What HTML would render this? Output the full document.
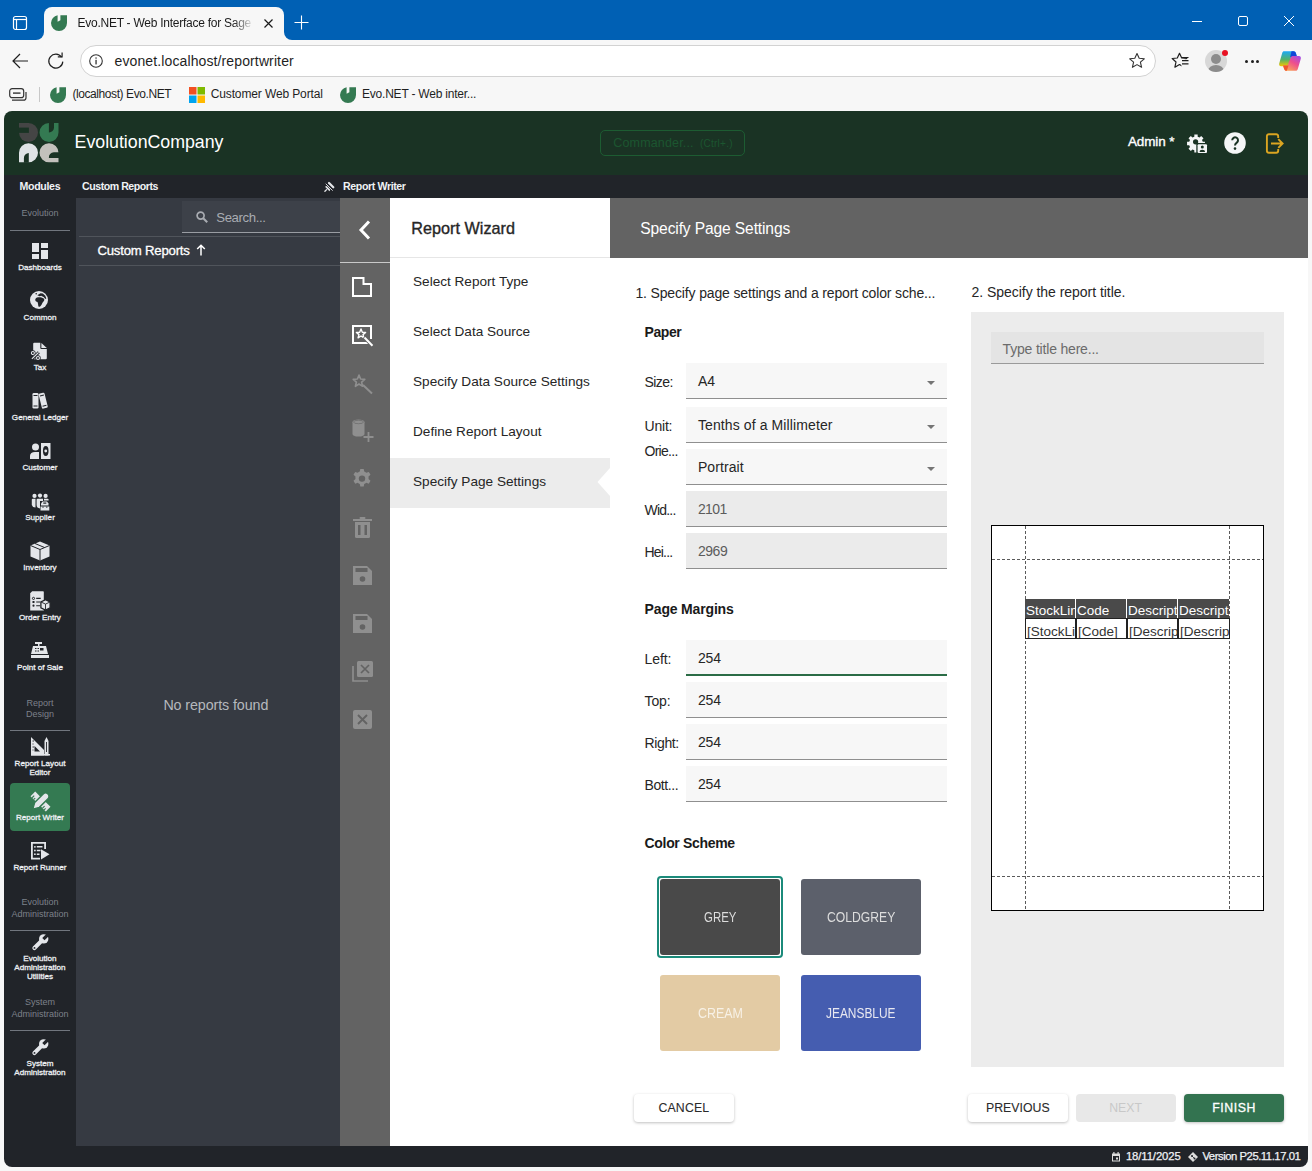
<!DOCTYPE html>
<html><head><meta charset="utf-8">
<style>
*{box-sizing:border-box;margin:0;padding:0}
html,body{width:1312px;height:1171px;overflow:hidden;background:#f7f7f7;font-family:"Liberation Sans",sans-serif;}
.a{position:absolute}
.t{position:absolute;white-space:nowrap;line-height:1}
svg{position:absolute;overflow:visible}
#tabbar{left:0;top:0;width:1312px;height:40px;background:#0060b4}
#tab{left:44px;top:7px;width:240px;height:34px;background:#f7f7f7;border-radius:8px 8px 0 0}
#toolbar{left:0;top:40px;width:1312px;height:71px;background:#f7f7f7}
#addr{left:80px;top:45px;width:1076px;height:32px;background:#fff;border:1px solid #d2d2d2;border-radius:16px}
.skirt{width:8px;height:8px;top:32px;background:#f7f7f7}
.skirt>div{position:absolute;left:0;top:0;width:8px;height:8px;background:#0060b4}
/* app */
#app{left:4px;top:111px;width:1304px;height:1056px;background:#212429;border-radius:8px;overflow:hidden}
#hdr{left:0;top:0;width:1304px;height:64px;background:#1a3324}
#crp{left:72px;top:87px;width:264px;height:948px;background:#363a42}
#strip{left:336px;top:87px;width:50px;height:948px;background:#636363}
#wiz{left:386px;top:87px;width:220px;height:948px;background:#fff}
#main{left:606px;top:87px;width:698px;height:948px;background:#fff}
#foot{left:0;top:1035px;width:1304px;height:21px;background:#212429}
</style></head>
<body>
<!-- ============ BROWSER CHROME ============ -->
<div id="tabbar" class="a"></div>
<div class="a skirt" style="left:36px"><div style="border-bottom-right-radius:8px"></div></div>
<div class="a skirt" style="left:284px"><div style="border-bottom-left-radius:8px"></div></div>
<div id="tab" class="a"></div>
<!-- sidebar toggle icon -->
<svg style="left:12px;top:15px" width="16" height="16" viewBox="0 0 16 16"><rect x="1.5" y="1.5" width="13" height="13" rx="2" fill="none" stroke="#fff" stroke-width="1.2"/><line x1="1.5" y1="4.5" x2="14.5" y2="4.5" stroke="#fff" stroke-width="1.2"/><line x1="4.5" y1="4.5" x2="4.5" y2="14.5" stroke="#fff" stroke-width="1.2"/></svg>
<!-- favicon -->
<svg style="left:51px;top:15px" width="16" height="16" viewBox="0 0 16 16"><path d="M6.6 0.2 L6.6 6.8 L9.4 5.2 L9.4 0.2 L16 0.2 L16 8 A8 8 0 1 1 0 8 A8 8 0 0 1 6.6 0.2 Z" fill="#347a52"/></svg>
<svg style="left:264px;top:19px" width="9" height="9" viewBox="0 0 9 9"><path d="M0.5 0.5L8.5 8.5M8.5 0.5L0.5 8.5" stroke="#1a1a1a" stroke-width="1.2"/></svg>
<svg style="left:294px;top:15px" width="15" height="15" viewBox="0 0 15 15"><path d="M7.5 0.5V14.5M0.5 7.5H14.5" stroke="#fff" stroke-width="1.1"/></svg>
<!-- window controls -->
<div class="a" style="left:1192px;top:21px;width:10px;height:1px;background:#fff"></div>
<div class="a" style="left:1238px;top:16px;width:10px;height:10px;border:1px solid #fff;border-radius:2px"></div>
<svg style="left:1284px;top:16px" width="10" height="10" viewBox="0 0 10 10"><path d="M0 0L10 10M10 0L0 10" stroke="#fff" stroke-width="1"/></svg>
<div id="toolbar" class="a"></div>
<!-- back / refresh -->
<svg style="left:12px;top:53px" width="17" height="16" viewBox="0 0 17 16"><path d="M16 8H1.2M8 1L1 8L8 15" fill="none" stroke="#1f1f1f" stroke-width="1.2"/></svg>
<svg style="left:47px;top:52px" width="18" height="18" viewBox="0 0 18 18"><path d="M14.6 5.2A7 7 0 1 0 15.8 9.6" fill="none" stroke="#1f1f1f" stroke-width="1.2"/><path d="M10.8 4.9H15.1V0.6" fill="none" stroke="#1f1f1f" stroke-width="1.2"/></svg>
<div id="addr" class="a"></div>
<svg style="left:89px;top:54px" width="14" height="14" viewBox="0 0 14 14"><circle cx="7" cy="7" r="6.3" fill="none" stroke="#333" stroke-width="1.1"/><rect x="6.4" y="5.8" width="1.3" height="4.6" fill="#333"/><rect x="6.4" y="3.4" width="1.3" height="1.3" fill="#333"/></svg>
<svg style="left:1128px;top:52px" width="18" height="18" viewBox="0 0 18 18"><path d="M9 1.5L11.2 6.3L16.3 6.8L12.4 10.2L13.6 15.3L9 12.6L4.4 15.3L5.6 10.2L1.7 6.8L6.8 6.3Z" fill="none" stroke="#333" stroke-width="1.1" stroke-linejoin="round"/></svg>
<svg style="left:1171px;top:52px" width="19" height="18" viewBox="0 0 19 18"><path d="M8.5 1.3L10.7 6L15.8 6.5L12 10L13.1 15.2L8.5 12.5L3.9 15.2L5 10L1.2 6.5L6.3 6Z" fill="none" stroke="#1f1f1f" stroke-width="1.2" stroke-linejoin="round"/><rect x="10.4" y="7.2" width="9" height="11" fill="#f7f7f7"/><path d="M11 5.5H17.5M11 8.6H17.5M11 11.8H17.5" stroke="#1f1f1f" stroke-width="1.2"/></svg>
<div class="a" style="left:1205px;top:50px;width:22px;height:22px;border-radius:50%;background:#d8d8d8;overflow:hidden"><div class="a" style="left:6px;top:4px;width:10px;height:10px;border-radius:50%;background:#8c8c8c"></div><div class="a" style="left:3px;top:15px;width:16px;height:12px;border-radius:50%;background:#8c8c8c"></div></div>
<div class="a" style="left:1222px;top:50px;width:6px;height:6px;border-radius:50%;background:#e81123"></div>
<div class="a" style="left:1245px;top:60px;width:3px;height:3px;border-radius:50%;background:#1f1f1f"></div>
<div class="a" style="left:1250.5px;top:60px;width:3px;height:3px;border-radius:50%;background:#1f1f1f"></div>
<div class="a" style="left:1256px;top:60px;width:3px;height:3px;border-radius:50%;background:#1f1f1f"></div>
<svg style="left:1279px;top:51px" width="22" height="20" viewBox="0 0 22 20"><defs><linearGradient id="cg1" x1="0" y1="0" x2="0" y2="1"><stop offset="0" stop-color="#1aa8f7"/><stop offset="0.55" stop-color="#52b26a"/><stop offset="1" stop-color="#f5c500"/></linearGradient><linearGradient id="cg2" x1="1" y1="0" x2="0.3" y2="1"><stop offset="0" stop-color="#9b4bf0"/><stop offset="0.5" stop-color="#ee4f8c"/><stop offset="1" stop-color="#fba45a"/></linearGradient></defs><path d="M5 0.2H14.5C15.8 0.2 16.5 1 17 2.5L18 6H13.5L10 14.5C9.5 15 9 15.2 8.5 15.2H2C0.6 15.2 -0.2 14 0.2 12.5L3.2 2C3.6 0.8 4.2 0.2 5 0.2Z" fill="url(#cg1)"/><path d="M12.5 0.2H14.5C15.8 0.2 16.5 1 17 2.5L18 6H13.5L11.2 6Z" fill="#1046d8"/><path d="M17 19.8H7.5C6.2 19.8 5.5 19 5 17.5L4 14.5H8.5L12 6C12.5 5.3 13 5 13.5 5H20C21.4 5 22.2 6.2 21.8 7.7L18.8 18C18.4 19.2 17.8 19.8 17 19.8Z" fill="url(#cg2)"/><path d="M4 14.5H9.5L7.8 19.8H7.5C6.2 19.8 5.5 19 5 17.5Z" fill="#f0552e"/></svg>
<!-- bookmarks -->
<svg style="left:9px;top:88px" width="18" height="13" viewBox="0 0 18 13"><rect x="0.7" y="0.7" width="14" height="9" rx="2.5" fill="none" stroke="#333" stroke-width="1.2"/><path d="M3 12.2H14.5C16 12.2 17 11.2 17 9.7V4" fill="none" stroke="#333" stroke-width="1.2"/><rect x="4" y="4.4" width="7.5" height="1.4" fill="#333"/></svg>
<div class="a" style="left:39px;top:87px;width:1px;height:15px;background:#c8c8c8"></div>
<svg style="left:50px;top:87px" width="16" height="16" viewBox="0 0 16 16"><path d="M6.6 0.2 L6.6 6.8 L9.4 5.2 L9.4 0.2 L16 0.2 L16 8 A8 8 0 1 1 0 8 A8 8 0 0 1 6.6 0.2 Z" fill="#347a52"/></svg>
<svg style="left:189px;top:87px" width="16" height="16" viewBox="0 0 16 16"><rect x="0" y="0" width="7.5" height="7.5" fill="#f25022"/><rect x="8.5" y="0" width="7.5" height="7.5" fill="#7fba00"/><rect x="0" y="8.5" width="7.5" height="7.5" fill="#00a4ef"/><rect x="8.5" y="8.5" width="7.5" height="7.5" fill="#ffb900"/></svg>
<svg style="left:340px;top:87px" width="16" height="16" viewBox="0 0 16 16"><path d="M6.6 0.2 L6.6 6.8 L9.4 5.2 L9.4 0.2 L16 0.2 L16 8 A8 8 0 1 1 0 8 A8 8 0 0 1 6.6 0.2 Z" fill="#347a52"/></svg>
<div class="t" style="left:77.50px;top:16.84px;font-size:12px;color:#1a1a1a;letter-spacing:-0.253px;width:176px;padding-bottom:4px;overflow:hidden;-webkit-mask-image:linear-gradient(90deg,#000 88%,transparent 100%)">Evo.NET - Web Interface for Sage</div>
<div class="t" style="left:114.50px;top:54.15px;font-size:14px;color:#1f1f1f;letter-spacing:0.119px;">evonet.localhost/reportwriter</div>
<div class="t" style="left:72.40px;top:88.44px;font-size:12px;color:#1f1f1f;letter-spacing:-0.417px;">(localhost) Evo.NET</div>
<div class="t" style="left:210.70px;top:88.44px;font-size:12px;color:#1f1f1f;letter-spacing:-0.122px;">Customer Web Portal</div>
<div class="t" style="left:362.00px;top:88.44px;font-size:12px;color:#1f1f1f;letter-spacing:-0.216px;">Evo.NET - Web inter...</div>
<div class="a" style="left:0;top:0;width:1312px;height:1171px;clip-path:inset(111px 4px 4px 4px round 8px)">
<div class="a" style="left:0px;top:111px;width:1312px;height:64px;background:#1a3324;"></div>
<div class="a" style="left:0px;top:175px;width:1312px;height:23px;background:#212429;"></div>
<div class="a" style="left:0px;top:198px;width:76px;height:948px;background:#212429;"></div>
<div class="a" style="left:76px;top:198px;width:264px;height:948px;background:#363a42;"></div>
<div class="a" style="left:340px;top:198px;width:50px;height:948px;background:#636363;"></div>
<div class="a" style="left:390px;top:198px;width:220px;height:948px;background:#ffffff;"></div>
<div class="a" style="left:610px;top:198px;width:698px;height:948px;background:#ffffff;"></div>
<div class="a" style="left:0px;top:1146px;width:1312px;height:25px;background:#212429;"></div>
<svg style="left:19px;top:123px;" width="40" height="40" viewBox="0 0 40 40">
<path d="M0 0H9.5A9.5 9.5 0 0 1 19 9.5A9.5 9.5 0 0 1 9.5 19A9.5 9.5 0 0 1 0 9.5Z" fill="#454545"/>
<rect x="-0.5" y="4.6" width="10.4" height="5.3" fill="#1a3324"/>
<g transform="translate(20.5 0)"><path d="M19 0V9.5A9.5 9.5 0 0 1 9.5 19A9.5 9.5 0 0 1 0 9.5A9.5 9.5 0 0 1 9.5 0Z" fill="#347a52"/>
<path d="M9.4 -0.5H14.5V4.5A5 5 0 0 1 9.4 9.5Z" fill="#1a3324"/></g>
<g transform="translate(0 20.2)"><path d="M0 19V9.5A9.5 9.5 0 0 1 9.5 0A9.5 9.5 0 0 1 19 9.5A9.5 9.5 0 0 1 9.5 19Z" fill="#dfe3e5"/>
<path d="M4.9 19.5V14.8A5 5 0 0 1 9.8 9.8V19.5Z" fill="#1a3324"/></g>
<g transform="translate(20.5 20.2)"><path d="M19 19H9.5A9.5 9.5 0 0 1 0 9.5A9.5 9.5 0 0 1 9.5 0A9.5 9.5 0 0 1 19 9.5Z" fill="#c3c1bc"/>
<path d="M19.5 9H14.4A5 5 0 0 0 9.4 14.7H19.5Z" fill="#1a3324"/></g>
</svg>
<div class="t" style="left:74.60px;top:133.63px;font-size:17.8px;color:#ffffff;letter-spacing:-0.027px;">EvolutionCompany</div>
<div class="a" style="left:600px;top:130px;width:145px;height:26px;background:transparent;border:1px solid #1d5c32;border-radius:5px;box-sizing:border-box"></div>
<div class="t" style="left:613.30px;top:137.02px;font-size:12.5px;color:#1c5630;letter-spacing:0.163px;">Commander...</div>
<div class="t" style="left:700.00px;top:139.13px;font-size:10px;color:#1c5630;letter-spacing:0.238px;">(Ctrl+.)</div>
<div class="t" style="left:1128.00px;top:135.37px;font-size:13.5px;color:#ffffff;letter-spacing:-0.145px;-webkit-text-stroke:0.35px #fff">Admin *</div>
<svg style="left:1185px;top:133px;" width="24" height="22" viewBox="0 0 24 22"><path fill="#f5f6f7" d="M19.95 8.85L19.95 12.15L17.79 12.19L17.00 14.11L18.50 15.66L16.16 18.00L14.61 16.50L12.69 17.29L12.65 19.45L9.35 19.45L9.31 17.29L7.39 16.50L5.84 18.00L3.50 15.66L5.00 14.11L4.21 12.19L2.05 12.15L2.05 8.85L4.21 8.81L5.00 6.89L3.50 5.34L5.84 3.00L7.39 4.50L9.31 3.71L9.35 1.55L12.65 1.55L12.69 3.71L14.61 4.50L16.16 3.00L18.50 5.34L17.00 6.89L17.79 8.81Z"/><circle cx="10.6" cy="8.8" r="2.6" fill="#1a3324"/><rect x="11.3" y="10" width="12" height="11.5" fill="#1a3324"/><rect x="12.6" y="11.3" width="9.4" height="8.8" rx="1" fill="#f5f6f7"/><circle cx="17.3" cy="14" r="1.5" fill="#1a3324"/><path d="M14.6 19H20A2.7 2.2 0 0 0 14.6 19Z" fill="#1a3324"/></svg>
<svg style="left:1224px;top:132px;" width="22" height="22" viewBox="0 0 22 22"><circle cx="11" cy="11" r="10.8" fill="#f5f6f7"/><path d="M8.2 8.3a2.9 2.9 0 1 1 4.6 2.3c-1.1 0.8-1.8 1.3-1.8 2.9" fill="none" stroke="#1a3324" stroke-width="2"/><circle cx="11" cy="16.6" r="1.3" fill="#1a3324"/></svg>
<svg style="left:1265.5px;top:133px;" width="19" height="21" viewBox="0 0 19 21"><path d="M12.2 5V3.2A2 2 0 0 0 10.2 1.2H2.9A2 2 0 0 0 0.9 3.2V17.8A2 2 0 0 0 2.9 19.8H10.2A2 2 0 0 0 12.2 17.8V16" fill="none" stroke="#dba521" stroke-width="1.9"/><path d="M5 10.5H16.5M12.3 6.2L16.6 10.5L12.3 14.8" fill="none" stroke="#dba521" stroke-width="1.9"/></svg>
<div class="t" style="left:19.50px;top:180.82px;font-size:10.6px;color:#f0f2f5;font-weight:bold;letter-spacing:-0.315px;">Modules</div>
<div class="t" style="left:82.00px;top:180.82px;font-size:10.6px;color:#f0f2f5;font-weight:bold;letter-spacing:-0.458px;">Custom Reports</div>
<div class="t" style="left:343.10px;top:180.72px;font-size:10.6px;color:#f0f2f5;font-weight:bold;letter-spacing:-0.386px;">Report Writer</div>
<svg style="left:323.5px;top:181.5px;" width="10" height="10" viewBox="0 0 10 10"><path d="M5 1L9.3 5.3" stroke="#e6e8eb" stroke-width="2.2" stroke-linecap="round"/><path d="M3.8 3.2L7 6.4L5.4 9.2L1 4.8Z" fill="#e6e8eb"/><path d="M2.6 7.6L0.9 9.3" stroke="#e6e8eb" stroke-width="1.3" stroke-linecap="round"/><path d="M1.6 1.6L8.6 8.6" stroke="#212429" stroke-width="2"/><path d="M2 2L8.4 8.4" stroke="#e6e8eb" stroke-width="0.9" stroke-linecap="round"/></svg>
<div class="a" style="left:182px;top:201px;width:158px;height:31px;background:#3d4149;"></div>
<div class="a" style="left:182px;top:232px;width:158px;height:1px;background:#9a9da3;"></div>
<svg style="left:196px;top:211px;" width="12" height="12" viewBox="0 0 12 12"><circle cx="4.6" cy="4.6" r="3.5" fill="none" stroke="#a9acb2" stroke-width="1.7"/><path d="M7.2 7.2L11.2 11.2" stroke="#a9acb2" stroke-width="2"/></svg>
<div class="t" style="left:216.30px;top:211.02px;font-size:13.2px;color:#a9acb2;letter-spacing:-0.403px;">Search...</div>
<div class="a" style="left:79px;top:236px;width:261px;height:1px;background:#50545b;"></div>
<div class="t" style="left:97.40px;top:243.82px;font-size:13.2px;color:#ffffff;letter-spacing:-0.213px;-webkit-text-stroke:0.3px #fff">Custom Reports</div>
<svg style="left:196px;top:244px;" width="10" height="12" viewBox="0 0 10 12"><path d="M5 11.5V1.2M1.2 5L5 1.2L8.8 5" fill="none" stroke="#fff" stroke-width="1.5"/></svg>
<div class="a" style="left:79px;top:265px;width:261px;height:1px;background:#50545b;"></div>
<div class="t" style="left:163.40px;top:697.69px;font-size:14.3px;color:#b5b8bd;letter-spacing:-0.101px;">No reports found</div>
<div class="a" style="left:340px;top:262px;width:50px;height:1px;background:#c9c9c9;"></div>
<svg style="left:359px;top:220px;" width="12" height="20" viewBox="0 0 12 20"><path d="M10 1.5L2 10L10 18.5" fill="none" stroke="#fff" stroke-width="3"/></svg>
<div class="a" style="left:390px;top:257px;width:220px;height:1px;background:#e6e6e6;"></div>
<div class="t" style="left:411.30px;top:220.08px;font-size:16.2px;color:#262626;letter-spacing:0.014px;-webkit-text-stroke:0.35px #262626">Report Wizard</div>
<div class="a" style="left:390px;top:458px;width:220px;height:50px;background:#ececec;"></div>
<svg style="left:596px;top:458px;" width="14" height="50" viewBox="0 0 14 50"><path d="M14 10L1.5 24L14 38Z" fill="#fff"/></svg>
<div class="t" style="left:413.00px;top:275.28px;font-size:13.6px;color:#262626;">Select Report Type</div>
<div class="t" style="left:413.00px;top:325.28px;font-size:13.6px;color:#262626;">Select Data Source</div>
<div class="t" style="left:413.00px;top:375.28px;font-size:13.6px;color:#262626;">Specify Data Source Settings</div>
<div class="t" style="left:413.00px;top:425.28px;font-size:13.6px;color:#262626;">Define Report Layout</div>
<div class="t" style="left:413.00px;top:475.28px;font-size:13.6px;color:#262626;">Specify Page Settings</div>
<div class="a" style="left:610px;top:198px;width:698px;height:60px;background:#636363;"></div>
<div class="t" style="left:640.30px;top:221.49px;font-size:15.6px;color:#ffffff;letter-spacing:-0.131px;">Specify Page Settings</div>
<div class="t" style="left:635.40px;top:285.75px;font-size:14px;color:#262626;letter-spacing:-0.148px;">1. Specify page settings and a report color sche...</div>
<div class="t" style="left:971.50px;top:284.95px;font-size:14px;color:#262626;letter-spacing:-0.035px;">2. Specify the report title.</div>
<div class="t" style="left:644.60px;top:325.45px;font-size:14px;color:#1a1a1a;font-weight:bold;letter-spacing:-0.453px;">Paper</div>
<div class="a" style="left:686px;top:363px;width:261px;height:36px;background:#f7f7f7;"></div>
<div class="a" style="left:686px;top:398px;width:261px;height:1px;background:#8f8f8f;"></div>
<div class="t" style="left:644.50px;top:375.05px;font-size:14px;color:#262626;letter-spacing:-0.581px;">Size:</div>
<div class="t" style="left:697.90px;top:374.15px;font-size:14px;color:#262626;">A4</div>
<svg style="left:927px;top:381px;" width="8" height="4" viewBox="0 0 8 4"><path d="M0 0H8L4 4Z" fill="#757575"/></svg>
<div class="a" style="left:686px;top:407px;width:261px;height:36px;background:#f7f7f7;"></div>
<div class="a" style="left:686px;top:442px;width:261px;height:1px;background:#8f8f8f;"></div>
<div class="t" style="left:644.50px;top:419.05px;font-size:14px;color:#262626;letter-spacing:-0.197px;">Unit:</div>
<div class="t" style="left:697.90px;top:418.15px;font-size:14px;color:#262626;letter-spacing:0.111px;">Tenths of a Millimeter</div>
<svg style="left:927px;top:425px;" width="8" height="4" viewBox="0 0 8 4"><path d="M0 0H8L4 4Z" fill="#757575"/></svg>
<div class="a" style="left:686px;top:449px;width:261px;height:36px;background:#f7f7f7;"></div>
<div class="a" style="left:686px;top:484px;width:261px;height:1px;background:#8f8f8f;"></div>
<div class="t" style="left:644.50px;top:443.75px;font-size:14px;color:#262626;letter-spacing:-0.720px;">Orie...</div>
<div class="t" style="left:697.90px;top:459.65px;font-size:14px;color:#262626;letter-spacing:0.082px;">Portrait</div>
<svg style="left:927px;top:467px;" width="8" height="4" viewBox="0 0 8 4"><path d="M0 0H8L4 4Z" fill="#757575"/></svg>
<div class="a" style="left:686px;top:491px;width:261px;height:36px;background:#ebebeb;"></div>
<div class="a" style="left:686px;top:526px;width:261px;height:1px;background:#8f8f8f;"></div>
<div class="t" style="left:644.50px;top:503.05px;font-size:14px;color:#262626;letter-spacing:-0.796px;">Wid...</div>
<div class="t" style="left:697.90px;top:502.15px;font-size:14px;color:#5c5c5c;letter-spacing:-0.615px;">2101</div>
<div class="a" style="left:686px;top:533px;width:261px;height:36px;background:#ebebeb;"></div>
<div class="a" style="left:686px;top:568px;width:261px;height:1px;background:#8f8f8f;"></div>
<div class="t" style="left:644.50px;top:545.05px;font-size:14px;color:#262626;letter-spacing:-0.795px;">Hei...</div>
<div class="t" style="left:697.90px;top:544.15px;font-size:14px;color:#5c5c5c;letter-spacing:-0.449px;">2969</div>
<div class="t" style="left:644.60px;top:602.15px;font-size:14px;color:#1a1a1a;font-weight:bold;letter-spacing:-0.166px;">Page Margins</div>
<div class="a" style="left:686px;top:640px;width:261px;height:36px;background:#f7f7f7;"></div>
<div class="a" style="left:686px;top:674px;width:261px;height:2px;background:#2b6c46;"></div>
<div class="t" style="left:644.50px;top:652.05px;font-size:14px;color:#262626;letter-spacing:-0.060px;">Left:</div>
<div class="t" style="left:697.90px;top:651.15px;font-size:14px;color:#262626;letter-spacing:-0.080px;">254</div>
<div class="a" style="left:686px;top:682px;width:261px;height:36px;background:#f7f7f7;"></div>
<div class="a" style="left:686px;top:717px;width:261px;height:1px;background:#8f8f8f;"></div>
<div class="t" style="left:644.50px;top:694.05px;font-size:14px;color:#262626;letter-spacing:-0.087px;">Top:</div>
<div class="t" style="left:697.90px;top:693.15px;font-size:14px;color:#262626;letter-spacing:-0.080px;">254</div>
<div class="a" style="left:686px;top:724px;width:261px;height:36px;background:#f7f7f7;"></div>
<div class="a" style="left:686px;top:759px;width:261px;height:1px;background:#8f8f8f;"></div>
<div class="t" style="left:644.50px;top:736.05px;font-size:14px;color:#262626;letter-spacing:-0.375px;">Right:</div>
<div class="t" style="left:697.90px;top:735.15px;font-size:14px;color:#262626;letter-spacing:-0.080px;">254</div>
<div class="a" style="left:686px;top:766px;width:261px;height:36px;background:#f7f7f7;"></div>
<div class="a" style="left:686px;top:801px;width:261px;height:1px;background:#8f8f8f;"></div>
<div class="t" style="left:644.50px;top:778.05px;font-size:14px;color:#262626;letter-spacing:-0.395px;">Bott...</div>
<div class="t" style="left:697.90px;top:777.15px;font-size:14px;color:#262626;letter-spacing:-0.080px;">254</div>
<div class="t" style="left:644.60px;top:835.75px;font-size:14px;color:#1a1a1a;font-weight:bold;letter-spacing:-0.331px;">Color Scheme</div>
<div class="a" style="left:657px;top:876px;width:126px;height:82px;background:transparent;border:2px solid #1b8a7a;border-radius:4px;box-sizing:border-box"></div>
<div class="a" style="left:660px;top:879px;width:120px;height:76px;background:#494949;border-radius:3px"></div>
<div class="a" style="left:801px;top:879px;width:120px;height:76px;background:#5c606b;border-radius:3px"></div>
<div class="a" style="left:660px;top:975px;width:120px;height:76px;background:#e3cba4;border-radius:3px"></div>
<div class="a" style="left:801px;top:975px;width:120px;height:76px;background:#455db0;border-radius:3px"></div>
<div class="t" style="left:703.80px;top:910.05px;font-size:14px;color:#dddddd;transform:scaleX(0.8166);transform-origin:0 0;">GREY</div>
<div class="t" style="left:826.85px;top:910.05px;font-size:14px;color:#dddddd;transform:scaleX(0.8692);transform-origin:0 0;">COLDGREY</div>
<div class="t" style="left:697.50px;top:1005.95px;font-size:14px;color:#f7f1e6;transform:scaleX(0.8900);transform-origin:0 0;">CREAM</div>
<div class="t" style="left:826.25px;top:1005.95px;font-size:14px;color:#e8e8f0;transform:scaleX(0.8507);transform-origin:0 0;">JEANSBLUE</div>
<div class="a" style="left:634px;top:1094px;width:100px;height:28px;background:#ffffff;border-radius:4px;box-shadow:0 1px 3px rgba(0,0,0,0.25)"></div>
<div class="t" style="left:658.40px;top:1101.59px;font-size:12.3px;color:#2b2b2b;letter-spacing:0.180px;-webkit-text-stroke:0.1px #2b2b2b">CANCEL</div>
<div class="a" style="left:968px;top:1094px;width:100px;height:28px;background:#ffffff;border-radius:4px;box-shadow:0 1px 3px rgba(0,0,0,0.25)"></div>
<div class="t" style="left:986.00px;top:1101.59px;font-size:12.3px;color:#2b2b2b;letter-spacing:0.019px;-webkit-text-stroke:0.1px #2b2b2b">PREVIOUS</div>
<div class="a" style="left:1076px;top:1094px;width:100px;height:28px;background:#e8e8e8;border-radius:4px"></div>
<div class="t" style="left:1109.20px;top:1101.59px;font-size:12.3px;color:#c8c8c8;letter-spacing:0.032px;">NEXT</div>
<div class="a" style="left:1184px;top:1094px;width:100px;height:28px;background:#337350;border-radius:4px;box-shadow:0 1px 3px rgba(0,0,0,0.25)"></div>
<div class="t" style="left:1212.20px;top:1101.59px;font-size:12.3px;color:#ffffff;letter-spacing:0.556px;-webkit-text-stroke:0.3px #fff">FINISH</div>
<div class="a" style="left:971px;top:312px;width:313px;height:755px;background:#ececec;"></div>
<div class="a" style="left:991px;top:332px;width:273px;height:32px;background:#e4e4e4;"></div>
<div class="a" style="left:991px;top:363px;width:273px;height:1px;background:#9a9a9a;"></div>
<div class="t" style="left:1002.60px;top:341.95px;font-size:14px;color:#6b6b6b;letter-spacing:-0.189px;">Type title here...</div>
<div class="a" style="left:991px;top:525px;width:273px;height:386px;background:#ffffff;border:1px solid #000;box-sizing:border-box"></div>
<div class="a" style="left:992px;top:559px;width:271px;height:1px;background:transparent;background-image:linear-gradient(90deg,#5a5a5a 60%,transparent 60%);background-size:5px 1px"></div>
<div class="a" style="left:992px;top:876px;width:271px;height:1px;background:transparent;background-image:linear-gradient(90deg,#5a5a5a 60%,transparent 60%);background-size:5px 1px"></div>
<div class="a" style="left:1025px;top:526px;width:1px;height:384px;background:transparent;background-image:linear-gradient(180deg,#5a5a5a 60%,transparent 60%);background-size:1px 5px"></div>
<div class="a" style="left:1229px;top:526px;width:1px;height:384px;background:transparent;background-image:linear-gradient(180deg,#5a5a5a 60%,transparent 60%);background-size:1px 5px"></div>
<div class="a" style="left:1025px;top:599px;width:50px;height:19px;background:#4a4a4a;overflow:hidden"></div>
<div class="a" style="left:1025px;top:599px;width:50px;height:19px;overflow:hidden"><div class="t" style="left:1px;top:5px;font-size:13.5px;color:#fff">StockLineName</div></div>
<div class="a" style="left:1025px;top:618px;width:51px;height:21px;border:1px solid #222;box-sizing:border-box;overflow:hidden"><div class="t" style="left:1px;top:6px;font-size:13.5px;color:#333">[StockLineName]</div></div>
<div class="a" style="left:1076px;top:599px;width:50px;height:19px;background:#4a4a4a;overflow:hidden"></div>
<div class="a" style="left:1076px;top:599px;width:50px;height:19px;overflow:hidden"><div class="t" style="left:1px;top:5px;font-size:13.5px;color:#fff">Code</div></div>
<div class="a" style="left:1076px;top:618px;width:51px;height:21px;border:1px solid #222;box-sizing:border-box;overflow:hidden"><div class="t" style="left:1px;top:6px;font-size:13.5px;color:#333">[Code]</div></div>
<div class="a" style="left:1127px;top:599px;width:50px;height:19px;background:#4a4a4a;overflow:hidden"></div>
<div class="a" style="left:1127px;top:599px;width:50px;height:19px;overflow:hidden"><div class="t" style="left:1px;top:5px;font-size:13.5px;color:#fff">Description</div></div>
<div class="a" style="left:1127px;top:618px;width:51px;height:21px;border:1px solid #222;box-sizing:border-box;overflow:hidden"><div class="t" style="left:1px;top:6px;font-size:13.5px;color:#333">[Description]</div></div>
<div class="a" style="left:1178px;top:599px;width:51px;height:19px;background:#4a4a4a;overflow:hidden"></div>
<div class="a" style="left:1178px;top:599px;width:51px;height:19px;overflow:hidden"><div class="t" style="left:1px;top:5px;font-size:13.5px;color:#fff">Description</div></div>
<div class="a" style="left:1178px;top:618px;width:52px;height:21px;border:1px solid #222;box-sizing:border-box;overflow:hidden"><div class="t" style="left:1px;top:6px;font-size:13.5px;color:#333">[Description]</div></div>
<svg style="left:1111px;top:1152px;" width="10" height="10" viewBox="0 0 10 10"><path d="M1 1.5H9V9.5H1Z" fill="#dcdcdc"/><rect x="2" y="4" width="6" height="4.5" fill="#212429"/><rect x="5" y="5.5" width="2" height="2" fill="#dcdcdc"/><rect x="2.3" y="0" width="1.2" height="2" fill="#dcdcdc"/><rect x="6.5" y="0" width="1.2" height="2" fill="#dcdcdc"/></svg>
<div class="t" style="left:1125.90px;top:1150.63px;font-size:11.3px;color:#f0f2f5;letter-spacing:-0.091px;-webkit-text-stroke:0.25px #f0f2f5">18/11/2025</div>
<svg style="left:1188px;top:1152px;" width="10" height="10" viewBox="0 0 10 10"><path d="M5 0L10 5L5 10L0 5Z" fill="#dcdcdc"/><circle cx="4" cy="4" r="1" fill="#212429"/><circle cx="6.5" cy="6.5" r="1" fill="#212429"/><path d="M4 4L6.5 6.5" stroke="#212429" stroke-width="0.8"/></svg>
<div class="t" style="left:1202.40px;top:1150.63px;font-size:11.3px;color:#f0f2f5;letter-spacing:-0.465px;-webkit-text-stroke:0.25px #f0f2f5">Version P25.11.17.01</div>
<div class="t" style="left:21.49px;top:209.28px;font-size:9.0px;color:#7d8189;">Evolution</div>
<div class="a" style="left:10px;top:230px;width:60px;height:1px;background:#71767e;"></div>
<div class="t" style="left:26.49px;top:698.58px;font-size:9.0px;color:#7d8189;">Report</div>
<div class="t" style="left:25.99px;top:710.28px;font-size:9.0px;color:#7d8189;">Design</div>
<div class="a" style="left:10px;top:730px;width:60px;height:1px;background:#71767e;"></div>
<div class="t" style="left:21.49px;top:898.38px;font-size:9.0px;color:#7d8189;">Evolution</div>
<div class="t" style="left:11.49px;top:910.38px;font-size:9.0px;color:#7d8189;">Administration</div>
<div class="a" style="left:10px;top:930px;width:60px;height:1px;background:#71767e;"></div>
<div class="t" style="left:25.00px;top:998.38px;font-size:9.0px;color:#7d8189;">System</div>
<div class="t" style="left:11.49px;top:1010.38px;font-size:9.0px;color:#7d8189;">Administration</div>
<div class="a" style="left:10px;top:1030px;width:60px;height:1px;background:#71767e;"></div>
<div class="a" style="left:10px;top:783px;width:60px;height:48px;background:#347a52;border-radius:4px"></div>
<div class="t" style="left:18.16px;top:263.54px;font-size:8.1px;color:#eef0f3;-webkit-text-stroke:0.3px #eef0f3">Dashboards</div>
<div class="t" style="left:23.57px;top:313.54px;font-size:8.1px;color:#eef0f3;-webkit-text-stroke:0.3px #eef0f3">Common</div>
<div class="t" style="left:33.70px;top:363.54px;font-size:8.1px;color:#eef0f3;-webkit-text-stroke:0.3px #eef0f3">Tax</div>
<div class="t" style="left:11.85px;top:413.94px;font-size:8.1px;color:#eef0f3;-webkit-text-stroke:0.3px #eef0f3">General Ledger</div>
<div class="t" style="left:22.44px;top:463.64px;font-size:8.1px;color:#eef0f3;-webkit-text-stroke:0.3px #eef0f3">Customer</div>
<div class="t" style="left:25.14px;top:513.64px;font-size:8.1px;color:#eef0f3;-webkit-text-stroke:0.3px #eef0f3">Supplier</div>
<div class="t" style="left:23.34px;top:563.64px;font-size:8.1px;color:#eef0f3;-webkit-text-stroke:0.3px #eef0f3">Inventory</div>
<div class="t" style="left:19.07px;top:613.64px;font-size:8.1px;color:#eef0f3;-webkit-text-stroke:0.3px #eef0f3">Order Entry</div>
<div class="t" style="left:17.03px;top:663.64px;font-size:8.1px;color:#eef0f3;-webkit-text-stroke:0.3px #eef0f3">Point of Sale</div>
<div class="t" style="left:14.56px;top:760.14px;font-size:8.1px;color:#eef0f3;-webkit-text-stroke:0.3px #eef0f3">Report Layout</div>
<div class="t" style="left:29.42px;top:768.64px;font-size:8.1px;color:#eef0f3;-webkit-text-stroke:0.3px #eef0f3">Editor</div>
<div class="t" style="left:15.99px;top:813.64px;font-size:8.1px;color:#eef0f3;-webkit-text-stroke:0.3px #eef0f3">Report Writer</div>
<div class="t" style="left:13.43px;top:863.64px;font-size:8.1px;color:#eef0f3;-webkit-text-stroke:0.3px #eef0f3">Report Runner</div>
<div class="t" style="left:23.34px;top:954.74px;font-size:8.1px;color:#eef0f3;-webkit-text-stroke:0.3px #eef0f3">Evolution</div>
<div class="t" style="left:14.34px;top:963.64px;font-size:8.1px;color:#eef0f3;-webkit-text-stroke:0.3px #eef0f3">Administration</div>
<div class="t" style="left:26.95px;top:972.54px;font-size:8.1px;color:#eef0f3;-webkit-text-stroke:0.3px #eef0f3">Utilities</div>
<div class="t" style="left:26.50px;top:1060.14px;font-size:8.1px;color:#eef0f3;-webkit-text-stroke:0.3px #eef0f3">System</div>
<div class="t" style="left:14.34px;top:1068.84px;font-size:8.1px;color:#eef0f3;-webkit-text-stroke:0.3px #eef0f3">Administration</div>
<svg style="left:32px;top:243px;" width="16" height="16" viewBox="0 0 16 16"><rect x="0" y="0" width="7" height="9" fill="#e4e6ea"/><rect x="9" y="0" width="7" height="5" fill="#e4e6ea"/><rect x="0" y="11" width="7" height="5" fill="#e4e6ea"/><rect x="9" y="7" width="7" height="9" fill="#e4e6ea"/></svg>
<svg style="left:30px;top:291px;" width="18" height="18" viewBox="0 0 18 18"><circle cx="9" cy="9" r="9" fill="#e4e6ea"/><path d="M5.3 9.3C4.9 7.8 6.3 6.4 8.3 6.3C10.3 6.1 12.3 6.8 13.4 7.3C14.7 8.1 14.5 9.6 13.5 10.4C12.5 11.4 12 12.9 11 14.4C10.2 15.7 9 16.4 8.5 15.4C8 14 8.2 12.4 7.5 10.9C6.5 10.7 5.6 10.4 5.3 9.3Z" fill="#212429"/><path d="M7.3 4.3L10.5 2.3L12.8 2.5L15.3 4.8L16.3 7.6L15.3 8L13.7 6.1L12 5.2L11.3 4.8L9.6 5.3Z" fill="#212429"/><circle cx="6.2" cy="2.8" r="0.8" fill="#212429"/></svg>
<svg style="left:31px;top:342px;" width="18" height="18" viewBox="0 0 18 18"><path d="M2.2 1.8Q2.2 0.7 3.3 0.7H9.3V6Q9.3 7.1 10.4 7.1H15.8V16.2Q15.8 17.3 14.7 17.3H3.3Q2.2 17.3 2.2 16.2Z" fill="#e4e6ea"/><path d="M10.4 0.9L15.8 6.1H10.4Z" fill="#e4e6ea"/><path d="M0.8 17.3L7.8 10.2" stroke="#212429" stroke-width="3"/><circle cx="1.9" cy="11" r="1.7" fill="#212429" stroke="#212429" stroke-width="2"/><circle cx="7" cy="16" r="1.7" fill="#212429" stroke="#212429" stroke-width="2"/><circle cx="1.9" cy="11" r="1.5" fill="none" stroke="#e4e6ea" stroke-width="1.1"/><circle cx="7" cy="16" r="1.5" fill="none" stroke="#e4e6ea" stroke-width="1.1"/><path d="M0.9 16.9L7.6 10.4" stroke="#e4e6ea" stroke-width="1.2"/></svg>
<svg style="left:32px;top:392px;" width="17" height="17" viewBox="0 0 17 17"><rect x="0.5" y="1" width="6" height="15.5" rx="1.3" fill="#e4e6ea"/><rect x="1.5" y="3" width="4" height="1" fill="#212429"/><rect x="1.5" y="13.5" width="4" height="1" fill="#212429"/><g transform="rotate(-14 11 9)"><rect x="8.3" y="1" width="6" height="15.5" rx="1.3" fill="#e4e6ea"/><rect x="9.3" y="3" width="4" height="1" fill="#212429"/><rect x="9.3" y="13.5" width="4" height="1" fill="#212429"/></g></svg>
<svg style="left:29.5px;top:443px;" width="21" height="16" viewBox="0 0 21 16"><circle cx="5.5" cy="4" r="3.5" fill="#e4e6ea"/><path d="M0 16V13C0 10.5 2 9 5 9H9V16Z" fill="#e4e6ea"/><rect x="11" y="0" width="9.5" height="16" fill="#e4e6ea"/><ellipse cx="15.75" cy="8" rx="2.8" ry="5" fill="#212429"/><circle cx="15.75" cy="8" r="1.4" fill="#e4e6ea"/></svg>
<svg style="left:31px;top:492px;" width="19" height="19" viewBox="0 0 19 19"><circle cx="3.5" cy="3.9" r="2.1" fill="#e4e6ea"/><circle cx="9" cy="3.6" r="2.1" fill="#e4e6ea"/><circle cx="14.6" cy="3.9" r="2.1" fill="#e4e6ea"/><path d="M0.8 7.8Q0.8 6.8 1.8 6.8H4.5V15.5Q1.5 15.5 0.8 13Z" fill="#e4e6ea"/><path d="M5.6 7.8Q5.6 6.8 6.6 6.8H12V9H9V16.5Q5.6 16 5.6 13Z" fill="#e4e6ea"/><path d="M13 6.8H16.6Q17.6 6.8 17.6 7.8V8.5H13Z" fill="#e4e6ea"/><path d="M10 11.5L11.5 9.5H16L17.5 11.5V13.5H10Z" fill="#e4e6ea"/><rect x="12.3" y="10.5" width="3" height="1.2" fill="#212429"/><path d="M9.5 14.5H18.3V18.5H9.5Z" fill="#e4e6ea"/><path d="M12 14.5V16M15.8 14.5V16" stroke="#212429" stroke-width="0.8"/></svg>
<svg style="left:30px;top:541px;" width="20" height="20" viewBox="0 0 20 20"><path d="M10 0.5L19.5 4.5V15.5L10 19.5L0.5 15.5V4.5Z" fill="#e4e6ea"/><path d="M0.5 4.5L10 8.5L19.5 4.5M10 8.5V19.5M5 2.5L14.5 6.5" fill="none" stroke="#212429" stroke-width="1"/></svg>
<svg style="left:30px;top:591px;" width="21" height="21" viewBox="0 0 21 21"><path d="M2.2 0.2H13Q13.8 0.2 13.8 1V19.5H0.2V2.2Z" fill="#e4e6ea"/><circle cx="3.5" cy="7.4" r="1.1" fill="none" stroke="#212429" stroke-width="1"/><rect x="2.5" y="10" width="2" height="2" fill="#212429"/><circle cx="3.5" cy="14.7" r="1.1" fill="#212429"/><path d="M6.2 7.4H10.7M6.2 11H10.2M6.2 14.7H10.2" stroke="#212429" stroke-width="1.1"/><path d="M15.5 8.7L20.1 10.9V16.9L15.5 19L10.9 16.9V10.9Z" fill="#e4e6ea" stroke="#212429" stroke-width="1.3"/><path d="M11 11L15.5 13.1L20 11M15.5 13.1V18.8" fill="none" stroke="#212429" stroke-width="0.9"/></svg>
<svg style="left:31px;top:642px;" width="18" height="16" viewBox="0 0 18 16"><rect x="4" y="0" width="7" height="2" fill="#e4e6ea"/><rect x="7" y="2" width="1.5" height="2" fill="#e4e6ea"/><path d="M2 4H15L17 12H0Z" fill="#e4e6ea"/><rect x="0" y="13" width="18" height="3" fill="#e4e6ea"/><rect x="4" y="6" width="1.5" height="1" fill="#212429"/><rect x="6.5" y="6" width="1.5" height="1" fill="#212429"/><rect x="9" y="6" width="3.5" height="2.5" fill="#212429"/><rect x="4" y="8.5" width="1.5" height="1" fill="#212429"/><rect x="6.5" y="8.5" width="1.5" height="1" fill="#212429"/></svg>
<svg style="left:31px;top:737px;" width="19" height="19" viewBox="0 0 19 19"><path d="M0 0L13 13V18.5H0Z" fill="#e4e6ea"/><path d="M3.5 9L9 14.5H3.5Z" fill="#212429"/><path d="M1.5 4H3M1.5 7H2.5M1.5 10H3M1.5 13H2.5" stroke="#212429" stroke-width="0.9"/><path d="M13.5 18.5V4L15.5 0L17.5 4V18.5Z" fill="#e4e6ea"/><path d="M15.5 5V15" stroke="#212429" stroke-width="0.9"/><rect x="0" y="17" width="19" height="1.5" fill="#e4e6ea"/></svg>
<svg style="left:29.5px;top:790.5px;" width="21" height="21" viewBox="0 0 21 21"><g transform="rotate(-45 10.5 10.5)"><path d="M7.2 -0.3H13.8V6.6H7.2Z" fill="#e4e6ea"/><path d="M7.2 14.4H13.8V21.3H7.2Z" fill="#e4e6ea"/><path d="M7.2 1.9H10.2M7.2 4.3H9.2M7.2 16.6H10.2M7.2 19H9.2" stroke="#347a52" stroke-width="1.1"/></g><g transform="rotate(45 10.5 10.5)"><path d="M7.2 3.3A3.3 3.3 0 0 1 13.8 3.3V15.4L10.5 21.3L7.2 15.4Z" fill="#e4e6ea" stroke="#347a52" stroke-width="1.3"/></g></svg>
<svg style="left:31px;top:842px;" width="19" height="18" viewBox="0 0 19 18"><path d="M14.1 7V0.9H0.9V16.6H9" fill="none" stroke="#e4e6ea" stroke-width="1.8"/><circle cx="3.9" cy="4.8" r="0.9" fill="#e4e6ea"/><circle cx="3.9" cy="8.5" r="0.9" fill="#e4e6ea"/><circle cx="3.9" cy="12.2" r="0.9" fill="#e4e6ea"/><path d="M5.8 4.8H11.5M5.8 8.5H9.5M5.8 12.2H8.5" stroke="#e4e6ea" stroke-width="1.4"/><path d="M10 7.2L18.5 12.3L10 17.4Z" fill="#e4e6ea"/></svg>
<svg style="left:31.8px;top:933.6px;" width="17" height="17" viewBox="0 0 17 17"><circle cx="11.7" cy="4.9" r="4.7" fill="#e4e6ea"/><path d="M9.8 6.6L2.4 14" stroke="#e4e6ea" stroke-width="4.1" stroke-linecap="round"/><path d="M11.4 5.2L16.5 0.1" stroke="#212429" stroke-width="3.3"/><circle cx="2.5" cy="13.9" r="0.95" fill="#212429"/></svg>
<svg style="left:31.8px;top:1038.6px;" width="17" height="17" viewBox="0 0 17 17"><circle cx="11.7" cy="4.9" r="4.7" fill="#e4e6ea"/><path d="M9.8 6.6L2.4 14" stroke="#e4e6ea" stroke-width="4.1" stroke-linecap="round"/><path d="M11.4 5.2L16.5 0.1" stroke="#212429" stroke-width="3.3"/><circle cx="2.5" cy="13.9" r="0.95" fill="#212429"/></svg>
<svg style="left:352px;top:277px;" width="20" height="20" viewBox="0 0 20 20"><path d="M1 1H11.5V7H19V19H1Z" fill="none" stroke="#ffffff" stroke-width="2"/></svg>
<svg style="left:352px;top:325px;" width="22" height="22" viewBox="0 0 22 22"><path d="M16 18H1V1H19V14" fill="none" stroke="#ffffff" stroke-width="2"/><path d="M9 4L10.3 7.2L13.6 7.4L11 9.6L11.9 12.8L9 11L6.1 12.8L7 9.6L4.4 7.4L7.7 7.2Z" fill="none" stroke="#ffffff" stroke-width="1.4" stroke-linejoin="round"/><path d="M12 12L20.5 21" stroke="#636363" stroke-width="3.6"/><path d="M12.5 12.5L20.5 20.8" stroke="#ffffff" stroke-width="2"/></svg>
<svg style="left:352px;top:374px;" width="21" height="20" viewBox="0 0 21 20"><path d="M7 1L8.6 5L12.8 5.4L9.6 8.2L10.6 12.3L7 10L3.4 12.3L4.4 8.2L1.2 5.4L5.4 5Z" fill="none" stroke="#8f8f8f" stroke-width="1.6" stroke-linejoin="round"/><path d="M11 11L20 19.5" stroke="#8f8f8f" stroke-width="2"/></svg>
<svg style="left:352px;top:419px;" width="22" height="24" viewBox="0 0 22 24"><ellipse cx="6.5" cy="3" rx="6" ry="2.6" fill="#8f8f8f"/><path d="M0.5 3V15C0.5 16.5 3 17.6 6.5 17.6C10 17.6 12.5 16.5 12.5 15V3Z" fill="#8f8f8f"/><ellipse cx="6.5" cy="3" rx="5" ry="1.7" fill="#8f8f8f" stroke="#636363" stroke-width="0.6"/><path d="M16.5 13V23M11.5 18H21.5" stroke="#8f8f8f" stroke-width="1.8"/></svg>
<svg style="left:352px;top:469px;" width="20" height="20" viewBox="0 0 20 20"><path fill="#8f8f8f" d="M8.3 0h3.4l0.5 2.6a7.5 7.5 0 0 1 2.1 1.2l2.5-0.9 1.7 2.9-2 1.8a7.5 7.5 0 0 1 0 2.4l2 1.8-1.7 2.9-2.5-0.9a7.5 7.5 0 0 1-2.1 1.2l-0.5 2.6h-3.4l-0.5-2.6a7.5 7.5 0 0 1-2.1-1.2l-2.5 0.9-1.7-2.9 2-1.8a7.5 7.5 0 0 1 0-2.4l-2-1.8 1.7-2.9 2.5 0.9a7.5 7.5 0 0 1 2.1-1.2Z"/><circle cx="10" cy="9.6" r="3.2" fill="#636363"/></svg>
<svg style="left:352.5px;top:516.5px;" width="19" height="21" viewBox="0 0 19 21"><rect x="0" y="2" width="19" height="2" fill="#8f8f8f"/><rect x="6.5" y="0" width="6" height="2" rx="1" fill="#8f8f8f"/><path d="M2 5H17V19.5A1.5 1.5 0 0 1 15.5 21H3.5A1.5 1.5 0 0 1 2 19.5Z" fill="#8f8f8f"/><rect x="5" y="8" width="2.5" height="10" fill="#636363"/><rect x="11.5" y="8" width="2.5" height="10" fill="#636363"/></svg>
<svg style="left:352.5px;top:565.5px;" width="19" height="19" viewBox="0 0 19 19"><path d="M0 0H14L19 5V19H0Z" fill="#8f8f8f"/><rect x="2.5" y="2" width="12" height="4" fill="#636363"/><circle cx="9.5" cy="13" r="2.8" fill="#636363"/></svg>
<svg style="left:352.5px;top:613.5px;" width="19" height="19" viewBox="0 0 19 19"><path d="M0 0H14L19 5V19H0Z" fill="#8f8f8f"/><rect x="2.5" y="2" width="12" height="4" fill="#636363"/><circle cx="9.5" cy="13" r="2.8" fill="#636363"/></svg>
<svg style="left:351.5px;top:660.5px;" width="21" height="21" viewBox="0 0 21 21"><path d="M1 5V20H16" fill="none" stroke="#8f8f8f" stroke-width="1.6"/><rect x="5" y="0" width="16" height="16" rx="1.5" fill="#8f8f8f"/><path d="M9 4L17 12M17 4L9 12" stroke="#636363" stroke-width="1.7"/></svg>
<svg style="left:352.5px;top:709.5px;" width="19" height="19" viewBox="0 0 19 19"><rect x="0" y="0" width="19" height="19" rx="2" fill="#8f8f8f"/><path d="M5 5L14 14M14 5L5 14" stroke="#636363" stroke-width="1.9"/></svg>
</div>
</body></html>
